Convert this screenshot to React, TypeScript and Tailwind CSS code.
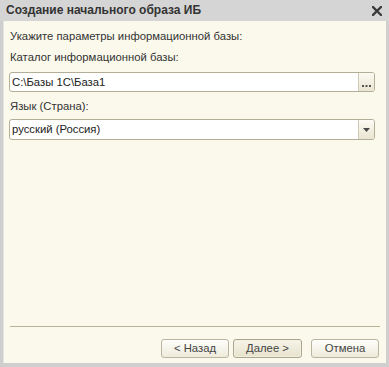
import React from "react";

const font = { fontFamily: '"Liberation Sans", Arial, sans-serif' };

function WizardButton({
  label,
  primary,
  className = "",
}: {
  label: string;
  primary?: boolean;
  className?: string;
}) {
  return (
    <button
      className={`block h-[19px] rounded-[3px] border text-[11.3px] leading-[17px] text-[#444] ${
        primary
          ? "w-[69px] border-[#a9a58e] bg-gradient-to-b from-[#f7f5e9] to-[#e6e2cc] shadow-[inset_0_0_0_1px_#f3f0df]"
          : "w-[68px] border-[#b9b59f] bg-gradient-to-b from-[#fefefb] to-[#eeebdb]"
      } ${className}`}
    >
      {label}
    </button>
  );
}

export default function App() {
  return (
    <div
      className="flex h-[367px] w-[389px] flex-col bg-[#cfcfcf] text-[#333]"
      style={font}
    >
      {/* Title bar */}
      <div className="flex h-[21px] shrink-0 items-center justify-between bg-[#d5d5d5] pl-[6px] pr-[7px]">
        <span className="text-[12px] font-bold leading-[15px] text-[#333]">
          Создание начального образа ИБ
        </span>
        <svg width="10" height="10" viewBox="0 0 10 10" className="mt-[1px]">
          <path d="M1 1 L9 9 M9 1 L1 9" stroke="#3a3a3a" strokeWidth="2.3" strokeLinecap="square" />
        </svg>
      </div>

      {/* Body */}
      <div className="mx-[3px] mb-[4px] flex flex-1 flex-col border-l border-[#e4e4e4] bg-[#fbf9ec] pt-[8px]">
        <div className="pl-[6px] text-[11.3px] leading-[15px]">Укажите параметры информационной базы:</div>
        <div className="mt-[6px] pl-[6px] text-[11.3px] leading-[15px]">Каталог информационной базы:</div>

        <div className="ml-[5px] mr-[11px] mt-[7px] flex h-[20px] overflow-hidden rounded-[3px] border border-[#b3ae97] bg-white">
          <div className="flex flex-1 items-center pl-[2px] text-[11.3px] leading-[15px] text-[#222]">
            C:\Базы 1С\База1
          </div>
          <div className="flex w-[16px] items-end justify-center border-l border-[#cdc9b4] bg-gradient-to-b from-[#fcfbf4] to-[#e9e5d1] pb-[4px]">
            <svg width="9" height="2" viewBox="0 0 9 2">
              <rect x="0" y="0" width="2" height="2" fill="#555" />
              <rect x="3.5" y="0" width="2" height="2" fill="#555" />
              <rect x="7" y="0" width="2" height="2" fill="#555" />
            </svg>
          </div>
        </div>

        <div className="mt-[7px] pl-[6px] text-[11.3px] leading-[15px]">Язык (Страна):</div>

        <div className="ml-[5px] mr-[11px] mt-[5px] flex h-[21px] overflow-hidden rounded-[3px] border border-[#b3ae97] bg-white">
          <div className="flex flex-1 items-center pl-[2px] text-[11.3px] leading-[15px] text-[#222]">
            русский (Россия)
          </div>
          <div className="flex w-[16px] items-center justify-center border-l border-[#cdc9b4] bg-gradient-to-b from-[#fcfbf4] to-[#e9e5d1]">
            <svg width="7" height="4" viewBox="0 0 7 4">
              <path d="M0 0 H7 L3.5 4 Z" fill="#4a4a4a" />
            </svg>
          </div>
        </div>

        <div className="flex-1" />

        <div className="mx-[6px] h-px shrink-0 bg-[#b8b394]" />

        <div className="mb-[5px] mr-[7px] mt-[12px] flex h-[19px] justify-end">
          <WizardButton label="< Назад" />
          <WizardButton label="Далее >" primary className="ml-[4px]" />
          <WizardButton label="Отмена" className="ml-[9px]" />
        </div>
      </div>
    </div>
  );
}
